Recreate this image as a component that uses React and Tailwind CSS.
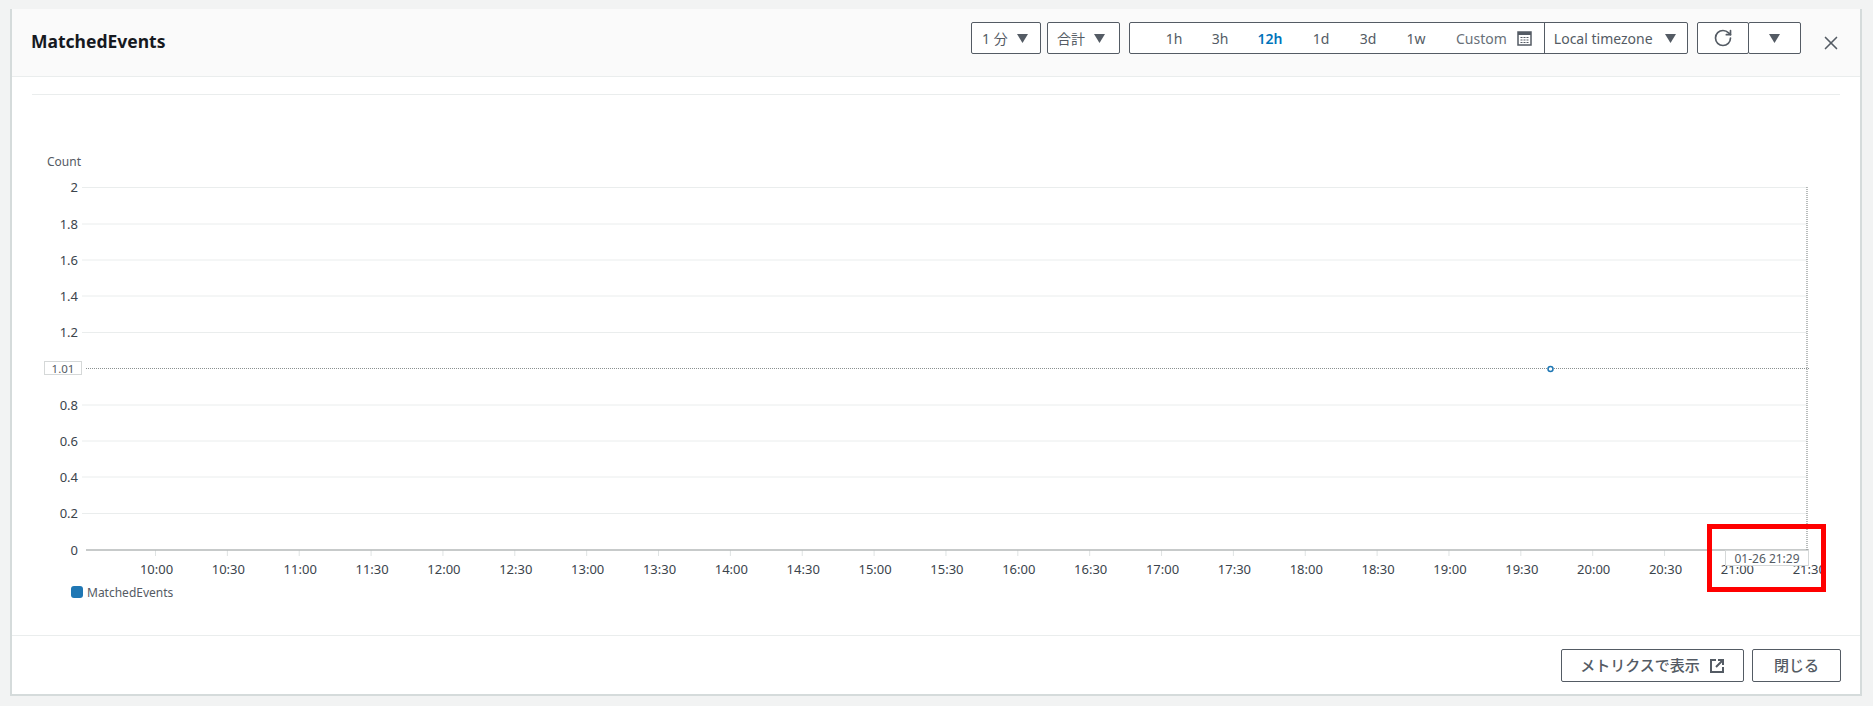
import React from "react";
import { RotateCw, X } from "lucide-react";

const FONT = '"Noto Sans", "Noto Sans CJK JP", sans-serif';

const yTicks = [
  { label: "2", y: 187.5 },
  { label: "1.8", y: 224 },
  { label: "1.6", y: 260 },
  { label: "1.4", y: 296 },
  { label: "1.2", y: 332.5 },
  { label: "0.8", y: 405 },
  { label: "0.6", y: 441 },
  { label: "0.4", y: 477 },
  { label: "0.2", y: 513.5 },
  { label: "0", y: 550 },
];

const xLabels = [
  "10:00", "10:30", "11:00", "11:30", "12:00", "12:30", "13:00", "13:30",
  "14:00", "14:30", "15:00", "15:30", "16:00", "16:30", "17:00", "17:30",
  "18:00", "18:30", "19:00", "19:30", "20:00", "20:30", "21:00", "21:30",
];

const ranges = [
  { label: "1h", cls: "w-[46px]" },
  { label: "3h", cls: "w-[46px]" },
  { label: "12h", cls: "w-[54px] font-semibold text-[#0073bb]" },
  { label: "1d", cls: "w-[48px]" },
  { label: "3d", cls: "w-[46px]" },
  { label: "1w", cls: "w-[50px]" },
];

const Caret = () => (
  <svg width="11" height="9" viewBox="0 0 11 9" className="shrink-0">
    <path d="M0 0h11L5.5 9z" fill="#545b64" />
  </svg>
);

const CalendarIcon = () => (
  <svg width="15" height="15" viewBox="0 0 15 15" className="shrink-0">
    <rect x="1" y="1" width="13" height="13" fill="none" stroke="#545b64" strokeWidth="1.5" />
    <rect x="1" y="1" width="13" height="3" fill="#545b64" />
    <path d="M3.5 6.5h2M6.500 6.500h2M9.500 6.500h2M3.500 9h2M6.500 9h2M9.500 9h2M3.500 11.500h2M6.500 11.500h2M9.500 11.500h2" stroke="#545b64" strokeWidth="1.200" />
  </svg>
);

const ExternalIcon = () => (
  <svg width="16" height="16" viewBox="0 0 16 16" fill="none" stroke="#545b64" strokeWidth="2" className="shrink-0">
    <path d="M7 2H2v12h12V9" />
    <path d="M9 2h5v5M14 2L7 9" />
  </svg>
);

const Chart = () => (
  <svg width="1852" height="540" viewBox="10 95 1852 540" className="block overflow-visible" style={{ fontFamily: FONT }}>
    <text x="47" y="165.500" fontSize="12" fill="#545b64">Count</text>

    {yTicks.map((t) => (
      <g key={t.label}>
        <text x="78" y={t.y + 4.500} fontSize="13" fill="#3b444c" textAnchor="end">{t.label}</text>
        {t.label !== "0" && <line x1="82" x2="1807" y1={t.y} y2={t.y} stroke="#eaeded" strokeWidth="1" />}
      </g>
    ))}

    {xLabels.map((label, i) => {
      const x = 155.500 + i * 71.860;
      return (
        <g key={label}>
          <line x1={x} x2={x} y1="550" y2="556" stroke="#dfe3e3" strokeWidth="1" />
          <text x={x + 1} y="574" fontSize="13" fill="#3b444c" textAnchor="middle">{label}</text>
        </g>
      );
    })}
    <line x1="86" x2="1809" y1="550" y2="550" stroke="#b4b8b8" strokeWidth="1.500" />

    {/* hover crosshair */}
    <line x1="86" x2="1809" y1="368.500" y2="368.500" stroke="#8a9090" strokeWidth="1.200" strokeDasharray="1 1" />
    <line x1="1807" x2="1807" y1="187" y2="550" stroke="#8a9090" strokeWidth="1.200" strokeDasharray="1 1" />
    <circle cx="1550.500" cy="369" r="2.500" fill="#fff" stroke="#1f77b4" strokeWidth="1.500" />

    <rect x="44.500" y="361.500" width="37" height="13" fill="#fff" stroke="#d5d8d8" />
    <text x="63" y="372.500" fontSize="11.500" fill="#545b64" textAnchor="middle">1.01</text>

    <rect x="1725.500" y="550.500" width="83" height="15" fill="#fff" stroke="#d5d8d8" />
    <text x="1767" y="563" fontSize="12" fill="#545b64" textAnchor="middle">01-26 21:29</text>

    <rect x="71" y="586" width="12" height="12" rx="3" fill="#1f77b4" />
    <text x="87" y="597" fontSize="12" fill="#545b64">MatchedEvents</text>

    {/* annotation */}
    <rect x="1709.500" y="526.500" width="114" height="63" fill="none" stroke="#ff0000" strokeWidth="5" />
  </svg>
);

export default function App() {
  return (
    <div className="h-[706px] w-[1873px] bg-[#f2f3f3] pt-[9px] pl-[10px] pr-[11px] overflow-hidden" style={{ fontFamily: FONT }}>
      <div className="h-[687px] bg-white border-l-2 border-r-2 border-b-2 border-[#d5dbdb] flex flex-col">
        {/* Header */}
        <div className="h-[68px] bg-[#fafafa] border-b border-[#eaeded] flex items-start pl-[19px] shrink-0">
          <h2 className="text-[17.5px] leading-[24px] font-bold text-[#16191f] mt-[20px]">MatchedEvents</h2>
          <div className="ml-auto mt-[13px] flex items-start text-[14px] text-[#545b64]">
            <div className="flex items-center w-[70px] h-[32px] bg-white border border-[#545b64] rounded-[2px] pl-[10px] gap-[9px]">
              <span>1 分</span>
              <Caret />
            </div>
            <div className="flex items-center w-[73px] h-[32px] bg-white border border-[#545b64] rounded-[2px] ml-[6px] pl-[9px] gap-[9px]">
              <span>合計</span>
              <Caret />
            </div>
            <div className="flex items-center h-[32px] w-[559px] bg-white border border-[#545b64] rounded-[2px] ml-[9px]">
              <div className="flex items-center pl-[21px]">
                {ranges.map((r) => (
                  <span key={r.label} className={`text-center ${r.cls}`}>{r.label}</span>
                ))}
              </div>
              <span className="ml-[15px] text-[#687078]">Custom</span>
              <span className="ml-[10px]"><CalendarIcon /></span>
              <div className="h-full ml-[12px] border-l border-[#545b64] flex items-center pl-[9px] gap-[12px]">
                <span>Local timezone</span>
                <Caret />
              </div>
            </div>
            <div className="flex items-center justify-center w-[52px] h-[32px] bg-white border border-[#545b64] rounded-[2px] ml-[9px]">
              <RotateCw size={20} strokeWidth={2} />
            </div>
            <div className="flex items-center justify-center w-[53px] h-[32px] bg-white border border-[#545b64] rounded-[2px] -ml-px">
              <Caret />
            </div>
            <X size={22} strokeWidth={1.8} className="ml-[19px] mr-[18px] mt-[10px]" />
          </div>
        </div>

        {/* Body */}
        <div className="flex-1 relative min-h-0">
          <div className="mx-5 mt-[17px] w-[1808px] border-t border-[#eaeded]" />
          <div className="-ml-[2px]">
            <Chart />
          </div>
        </div>

        {/* Footer */}
        <div className="h-[59px] border-t border-[#eaeded] flex items-start justify-end gap-2 pt-[13px] pr-[19px] shrink-0 text-[15px] font-medium text-[#545b64]">
          <div className="flex items-center justify-center gap-[9px] w-[183px] h-[33px] border border-[#545b64] rounded-[2px]">
            <span>メトリクスで表示</span>
            <ExternalIcon />
          </div>
          <div className="flex items-center justify-center w-[89px] h-[33px] border border-[#545b64] rounded-[2px]">
            閉じる
          </div>
        </div>
      </div>
    </div>
  );
}
